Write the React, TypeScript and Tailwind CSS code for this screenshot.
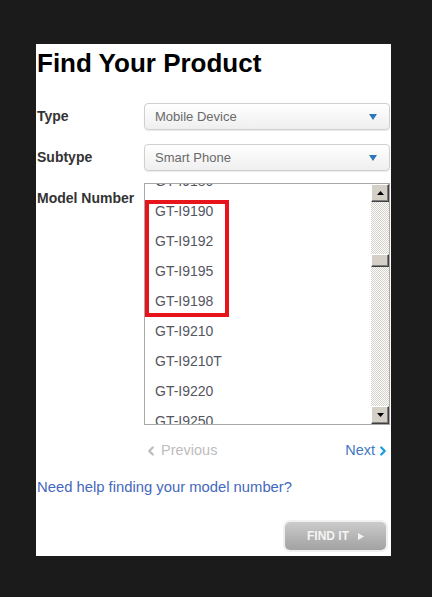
import { ChevronLeft, ChevronRight } from 'lucide-react'

const MODELS = [
  'GT-I9180',
  'GT-I9190',
  'GT-I9192',
  'GT-I9195',
  'GT-I9198',
  'GT-I9210',
  'GT-I9210T',
  'GT-I9220',
  'GT-I9250',
]

function SelectBox({ value }: { value: string }) {
  return (
    <div className="flex h-[27px] w-[246px] items-center justify-between rounded-[4px] border border-[#cfcfcf] bg-gradient-to-b from-white to-[#efefef] pl-[10px] pr-[12px] shadow-[0_1px_1px_rgba(0,0,0,0.08)]">
      <span className="text-[13px] text-[#6a6a6a]">{value}</span>
      <svg width="8" height="6" viewBox="0 0 8 6">
        <path d="M0 0 H8 L4 6 Z" fill="#2a78b8" />
      </svg>
    </div>
  )
}

function ScrollButton({ dir }: { dir: 'up' | 'down' }) {
  return (
    <div className="flex h-[18px] w-[18px] items-center justify-center border border-t-white border-l-white border-b-[#404040] border-r-[#404040] bg-[#d4d0c8] shadow-[inset_-1px_-1px_0_#808080]">
      <svg width="7" height="4" viewBox="0 0 7 4">
        <path d={dir === 'up' ? 'M3.5 0 L7 4 H0 Z' : 'M0 0 H7 L3.5 4 Z'} fill="#000" />
      </svg>
    </div>
  )
}

function ModelList() {
  return (
    <div className="relative flex h-[242px] w-[246px] border border-[#a9a9a9] bg-white">
      <div className="flex-1 overflow-hidden">
        <div className="-mt-[18px] pl-[10px]">
          {MODELS.map((m) => (
            <div key={m} className="flex h-[30px] items-center text-[14px] text-[#555560]">
              {m}
            </div>
          ))}
        </div>
      </div>
      <div className="flex w-[18px] flex-col">
        <ScrollButton dir="up" />
        <div className="flex flex-1 flex-col bg-[repeating-conic-gradient(#d4d0c8_0_25%,#fff_0_50%)] bg-[length:2px_2px]">
          <div className="h-[52px]" />
          <div className="h-[13px] w-[18px] border border-t-white border-l-white border-b-[#404040] border-r-[#404040] bg-[#d4d0c8] shadow-[inset_-1px_-1px_0_#808080]" />
        </div>
        <ScrollButton dir="down" />
      </div>
      {/* highlight annotation */}
      <div className="absolute left-0 top-[16px] h-[117px] w-[84px] border-[4px] border-[#e8141b]" />
    </div>
  )
}

export default function App() {
  return (
    <div
      className="h-[597px] w-[432px] bg-[#1b1b1b] pt-[44px] pl-[36px]"
      style={{ fontFamily: '"Liberation Sans", Arial, sans-serif' }}
    >
      <div className="flex h-[512px] w-[355px] flex-col bg-white pt-[4px] pl-[1px] pr-[1px]">
        <h1 className="text-[26px] font-bold leading-[30px] text-black">Find Your Product</h1>

        <div className="mt-[25px] flex items-center">
          <span className="w-[107px] text-[14px] font-bold text-[#333]">Type</span>
          <SelectBox value="Mobile Device" />
        </div>

        <div className="mt-[14px] flex items-center">
          <span className="w-[107px] text-[14px] font-bold text-[#333]">Subtype</span>
          <SelectBox value="Smart Phone" />
        </div>

        <div className="mt-[12px] flex items-start">
          <span className="mt-[5px] w-[107px] text-[14px] font-bold leading-[20px] text-[#333]">
            Model Number
          </span>
          <ModelList />
        </div>

        <div className="mt-[16px] ml-[107px] flex h-[20px] items-center justify-between">
          <span className="flex items-center text-[14.5px] text-[#bdbdbd]">
            <ChevronLeft size={14} strokeWidth={4} className="mr-[3px] text-[#bdbdbd]" />
            Previous
          </span>
          <span className="flex items-center text-[14.5px] text-[#4277c0]">
            Next
            <ChevronRight size={14} strokeWidth={4} className="ml-[1px] text-[#1b9be0]" />
          </span>
        </div>

        <a className="mt-[16px] block text-[14.8px] leading-[20px] text-[#4468bd]" href="#">
          Need help finding your model number?
        </a>

        <div className="mt-[25px] flex justify-end pr-[4px]">
          <button className="flex h-[28px] w-[101px] items-center justify-center gap-[9px] rounded-[5px] bg-gradient-to-b from-[#cbcbcb] to-[#a2a2a2] shadow-[0_0_0_2px_#f0f0f0] text-[12px] font-bold text-[#f4f4f4]">
            FIND IT
            <svg width="6" height="7" viewBox="0 0 6 7">
              <path d="M0 0 L6 3.5 L0 7 Z" fill="#f4f4f4" />
            </svg>
          </button>
        </div>
      </div>
    </div>
  )
}
